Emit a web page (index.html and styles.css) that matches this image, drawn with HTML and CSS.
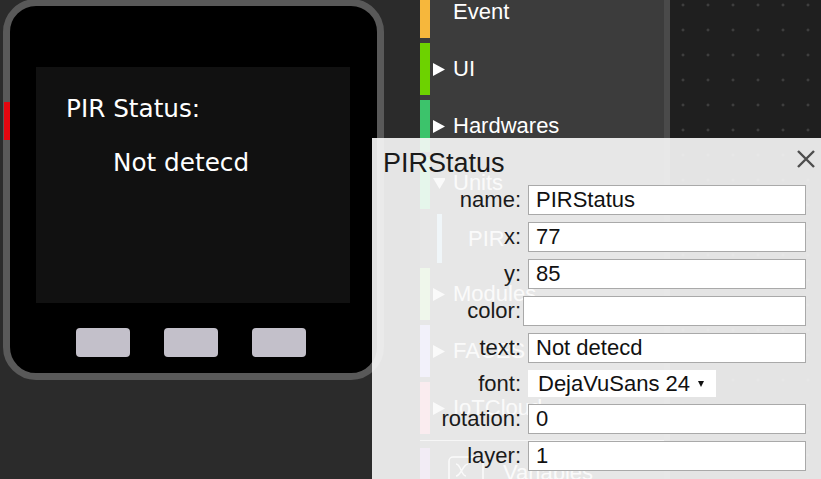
FILE: index.html
```html
<!DOCTYPE html>
<html lang="en">
<head>
<meta charset="utf-8">
<title>PIRStatus</title>
<link rel="stylesheet" href="styles.css">
</head>
<body>
<div class="app">
  <div class="stage">
    <div class="device">
      <span class="side-key"></span>
      <div class="screen">
        <span class="scr-label scr-title">PIR Status:</span>
        <span class="scr-label scr-status">Not detecd</span>
      </div>
      <div class="buttons">
        <span class="hw-btn"></span>
        <span class="hw-btn"></span>
        <span class="hw-btn"></span>
      </div>
    </div>
  </div>

  <nav class="toolbox">
    <div class="cat">
      <span class="bar bar-event"></span>
      <span class="arrow arrow-none"></span>
      <span class="cat-name">Event</span>
    </div>
    <div class="cat">
      <span class="bar bar-ui"></span>
      <svg class="arrow" viewBox="0 0 12 13"><polygon points="0,0 12,6.5 0,13" fill="#fff"/></svg>
      <span class="cat-name">UI</span>
    </div>
    <div class="cat">
      <span class="bar bar-hw"></span>
      <svg class="arrow" viewBox="0 0 12 13"><polygon points="0,0 12,6.5 0,13" fill="#fff"/></svg>
      <span class="cat-name">Hardwares</span>
    </div>
    <div class="cat">
      <span class="bar bar-units"></span>
      <svg class="arrow" viewBox="0 0 12 13"><polygon points="0,1 13,1 6.5,12" fill="#fff"/></svg>
      <span class="cat-name">Units</span>
    </div>
    <div class="cat cat-sub">
      <span class="bar bar-pir"></span>
      <span class="cat-name">PIR</span>
    </div>
    <div class="cat">
      <span class="bar bar-modules"></span>
      <svg class="arrow" viewBox="0 0 12 13"><polygon points="0,0 12,6.5 0,13" fill="#fff"/></svg>
      <span class="cat-name">Modules</span>
    </div>
    <div class="cat">
      <span class="bar bar-faces"></span>
      <svg class="arrow" viewBox="0 0 12 13"><polygon points="0,0 12,6.5 0,13" fill="#fff"/></svg>
      <span class="cat-name">FACES</span>
    </div>
    <div class="cat">
      <span class="bar bar-iot"></span>
      <svg class="arrow" viewBox="0 0 12 13"><polygon points="0,0 12,6.5 0,13" fill="#fff"/></svg>
      <span class="cat-name">IoTCloud</span>
    </div>
    <div class="sep"></div>
    <div class="cat cat-vars">
      <span class="bar bar-vars"></span>
      <svg class="var-icon" viewBox="0 0 36 30"><rect x="1" y="1" width="34" height="34" rx="4" fill="none" stroke="#fff" stroke-width="1.5"/><path d="M8 8 C13 8 13 20 18 20 M8 20 C13 20 15 8 20 8" fill="none" stroke="#fff" stroke-width="1.5"/></svg>
      <span class="cat-name">Variables</span>
    </div>
  </nav>
  <div class="scroll-strip"></div>
  <div class="workspace"></div>

  <section class="props">
    <header class="props-head">
      <h1 class="props-title">PIRStatus</h1>
      <svg class="close" viewBox="0 0 20 20"><path d="M2 2 L18 18 M18 2 L2 18" stroke="#4d4d4d" stroke-width="2.4" fill="none"/></svg>
    </header>
    <div class="form">
      <label class="f-label">name:</label>
      <span class="f-input">PIRStatus</span>
      <label class="f-label">x:</label>
      <span class="f-input">77</span>
      <label class="f-label">y:</label>
      <span class="f-input">85</span>
      <label class="f-label">color:</label>
      <span class="f-input f-color"></span>
      <label class="f-label">text:</label>
      <span class="f-input">Not detecd</span>
      <label class="f-label">font:</label>
      <span class="f-select">DejaVuSans 24<span class="caret"></span></span>
      <label class="f-label">rotation:</label>
      <span class="f-input">0</span>
      <label class="f-label">layer:</label>
      <span class="f-input">1</span>
    </div>
  </section>
</div>
</body>
</html>
```

FILE: styles.css
```css
* { box-sizing: border-box; }
html, body { margin: 0; padding: 0; }
body {
  width: 821px;
  height: 479px;
  overflow: hidden;
  background: #2b2b2b;
  font-family: "Liberation Sans", Arial, sans-serif;
}
.app {
  position: relative;
  display: flex;
  width: 821px;
  height: 479px;
  overflow: hidden;
}

/* stage with device */
.stage {
  width: 420px;
  flex: none;
  background: #2b2b2b;
}
.device {
  position: relative;
  width: 381px;
  height: 381px;
  margin: -1px 0 0 3px;
  border: 7px solid #595959;
  border-radius: 33px;
  background: #000;
  display: flex;
  flex-direction: column;
}
.side-key {
  position: absolute;
  left: -6px;
  top: 96px;
  width: 6px;
  height: 38px;
  background: #e4060f;
}
.screen {
  position: relative;
  width: 314px;
  height: 236px;
  margin: 61px 0 0 26px;
  background: #111;
}
.scr-label {
  position: absolute;
  font-family: "DejaVu Sans", sans-serif;
  font-size: 24.7px;
  line-height: 1;
  color: #fff;
  white-space: nowrap;
}
.scr-title { left: 30px; top: 30px; }
.scr-status { left: 77px; top: 84px; }
.buttons {
  display: flex;
  gap: 34px;
  margin: 25px 0 0 66px;
}
.hw-btn {
  width: 54px;
  height: 29px;
  border-radius: 4px;
  background: #c3c0ca;
}

/* toolbox */
.toolbox {
  width: 244px;
  flex: none;
  background: #3c3c3c;
  display: flex;
  flex-direction: column;
  gap: 5px;
  margin-top: -14px;
  height: 493px;
  overflow: hidden;
}
.cat {
  display: flex;
  align-items: center;
  height: 52px;
  flex: none;
  color: #fff;
  font-size: 22px;
}
.bar {
  width: 10px;
  align-self: stretch;
  flex: none;
}
.arrow {
  width: 12px;
  height: 13px;
  margin: 0 8px 0 3px;
  flex: none;
}
.arrow-none { display: block; }
.cat-name { white-space: nowrap; }
.cat-sub {
  height: 49px;
  padding-left: 17px;
}
.cat-sub .bar { width: 5px; }
.cat-sub .cat-name { margin-left: 26px; }
.bar-event { background: #f6b73c; }
.bar-ui { background: #6dd200; }
.bar-hw { background: #3cc36b; }
.bar-units { background: #2fd76a; }
.bar-pir { background: #9ad4f0; }
.bar-modules { background: #8fe06a; }
.bar-faces { background: #a8a0ff; }
.bar-iot { background: #ff6f90; }
.bar-vars { background: #b070c8; }
.sep {
  height: 1px;
  margin: 1px 0 2px;
  background: #d0d0d0;
  flex: none;
}
.cat-vars { align-items: flex-start; }
.var-icon {
  width: 36px;
  height: 30px;
  margin: 8px 0 0 18px;
  flex: none;
}
.cat-vars .cat-name { margin: 12px 0 0 19px; }

.scroll-strip {
  width: 6px;
  flex: none;
  background: #4a4a4a;
}
.workspace {
  flex: 1;
  background-color: #1f1f1f;
  background-image: radial-gradient(circle, #4e4e4e 0.9px, transparent 1.4px);
  background-size: 25px 25px;
  background-position: 0.5px -7.5px;
}

/* properties panel */
.props {
  position: absolute;
  left: 372px;
  top: 138px;
  right: -20px;
  bottom: -20px;
  background: rgba(250, 250, 250, 0.9);
  padding: 12px 0 0 11px;
  color: #1a1a1a;
}
.props-head {
  position: relative;
  height: 27px;
  margin-bottom: 8px;
}
.props-title {
  margin: 0;
  font-size: 27px;
  line-height: 27px;
  font-weight: normal;
  color: #1a1a1a;
}
.close {
  position: absolute;
  left: 413px;
  top: -1px;
  width: 20px;
  height: 20px;
}
.form {
  display: grid;
  grid-template-columns: 138px 278px;
  column-gap: 7px;
  row-gap: 7px;
  align-items: center;
  font-size: 22px;
}
.f-label {
  text-align: right;
  white-space: nowrap;
  color: #1a1a1a;
}
.f-input {
  display: block;
  height: 30px;
  line-height: 28px;
  border: 1px solid #a9a9a9;
  background: #fff;
  padding: 0 7px;
  color: #111;
  white-space: nowrap;
}
.f-color { margin-left: -5px; }
.f-select {
  justify-self: start;
  display: flex;
  align-items: center;
  width: 188px;
  height: 27px;
  background: #fff;
  padding-left: 10px;
  font-size: 22px;
  color: #111;
  white-space: nowrap;
}
.caret {
  width: 0;
  height: 0;
  margin-left: 8px;
  border-left: 3px solid transparent;
  border-right: 3px solid transparent;
  border-top: 6px solid #111;
}
```
